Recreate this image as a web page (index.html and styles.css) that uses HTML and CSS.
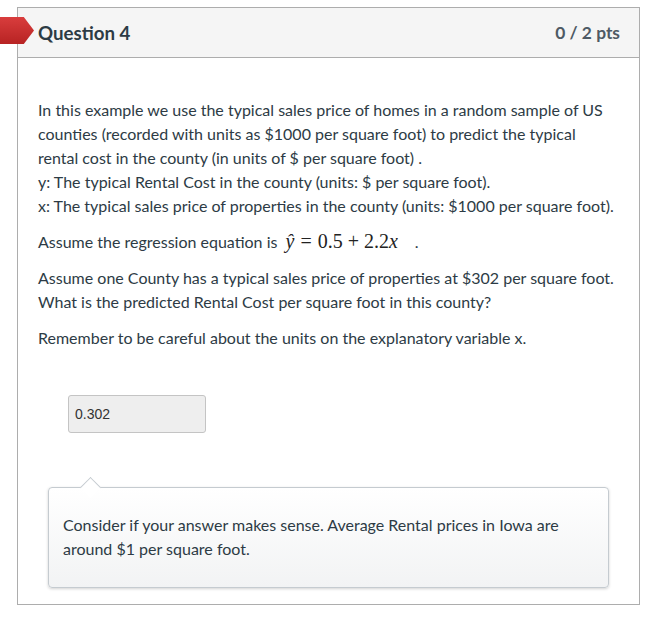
FILE: index.html
```html
<!DOCTYPE html>
<html>
<head>
<meta charset="utf-8">
<link rel="stylesheet" href="styles.css">
</head>
<body>
<div class="question">
  <div class="q-header">
    <span class="flag"></span>
    <span class="q-title">Question 4</span>
    <span class="q-points">0 / 2 pts</span>
  </div>
  <div class="q-body">
    <p>In this example we use the typical sales price of homes in a random sample of US<br>counties (recorded with units as $1000 per square foot) to predict the typical<br>rental cost in the county (in units of $ per square foot) .<br>y: The typical Rental Cost in the county (units: $ per square foot).<br>x: The typical sales price of properties in the county (units: $1000 per square foot).</p>
    <p>Assume the regression equation is <span class="math"><span class="mi">y&#770;</span><span class="rel">=</span>0.5<span class="bin">+</span>2.2<span class="mi">x</span></span><span class="dot">.</span></p>
    <p>Assume one County has a typical sales price of properties at $302 per square foot.<br>What is the predicted Rental Cost per square foot in this county?</p>
    <p>Remember to be careful about the units on the explanatory variable x.</p>
    <div class="answer">0.302</div>
    <div class="comment">Consider if your answer makes sense. Average Rental prices in Iowa are<br>around $1 per square foot.</div>
  </div>
</div>
</body>
</html>
```
FILE: styles.css
```css
html, body {
  margin: 0;
  padding: 0;
  background: #fff;
}
body {
  padding: 7px 16px 0 17px;
  font-family: Lato, "Open Sans", sans-serif;
  color: #2d3b45;
}
.question {
  border: 1px solid #adadad;
  width: 621px;
}
.q-header {
  position: relative;
  height: 49px;
  background: #f5f5f5;
  border-bottom: 1px solid #adadad;
  display: flex;
  align-items: center;
  justify-content: space-between;
  padding: 0 19px 0 20px;
}
.flag {
  position: absolute;
  left: -18px;
  top: 9px;
  width: 34px;
  height: 27px;
  background: linear-gradient(#d93d3d, #b72323);
  clip-path: polygon(0 0, 70% 0, 100% 50%, 70% 100%, 0 100%);
}
.q-title {
  font-size: 18.7px;
  font-weight: 700;
  color: #2d3b45;
}
.q-points {
  font-size: 17.4px;
  font-weight: 700;
  color: #4e5a64;
}
.q-body {
  padding: 40px 20px 16px 20px;
  font-size: 16px;
  line-height: 24px;
}
.q-body p {
  margin: 0 0 12px 0;
}
.math {
  font-family: "Liberation Serif", "DejaVu Serif", serif;
  font-size: 20px;
  line-height: 0;
  margin-left: 4px;
  color: #222;
}
.mi {
  font-style: italic;
}
.rel {
  margin: 0 6px;
}
.bin {
  margin: 0 5px;
}
.dot {
  margin-left: 17px;
}
.answer {
  margin: 45px 0 0 30px;
  width: 124px;
  height: 36px;
  background: #eeeeee;
  border: 1px solid #c4c4c4;
  border-radius: 3px;
  font-family: "Liberation Sans", Arial, sans-serif;
  font-size: 14px;
  color: #333;
  line-height: 36px;
  padding-left: 6px;
  padding-right: 6px;
}
.comment {
  position: relative;
  margin: 54px 0 0 10px;
  width: 531px;
  padding: 25px 14px 26px 14px;
  border: 1px solid #c5cbd0;
  border-radius: 4px;
  background: linear-gradient(#ffffff, #f2f3f4);
  box-shadow: 0 1px 3px rgba(0, 0, 0, 0.18);
  font-size: 16px;
  line-height: 24px;
  color: #2d3b45;
}
.comment::before {
  content: "";
  position: absolute;
  left: 34px;
  top: -8px;
  width: 14px;
  height: 14px;
  background: #fff;
  border-top: 1px solid #c5cbd0;
  border-left: 1px solid #c5cbd0;
  transform: rotate(45deg);
}
```
